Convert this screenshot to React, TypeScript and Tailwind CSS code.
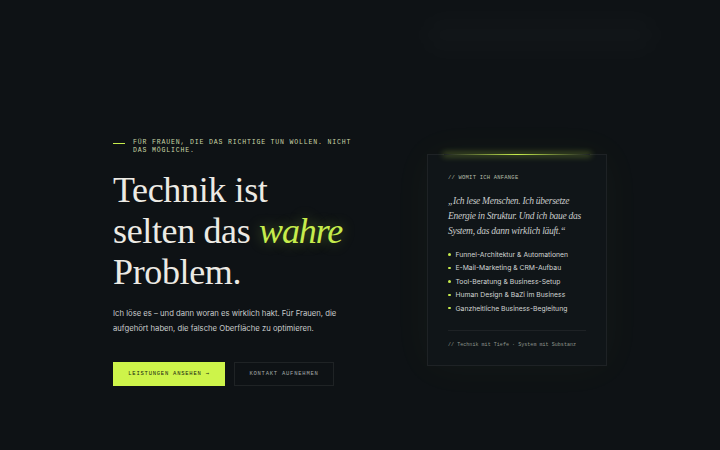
import * as React from 'react';

const services = [
  'Funnel-Architektur & Automationen',
  'E-Mail-Marketing & CRM-Aufbau',
  'Tool-Beratung & Business-Setup',
  'Human Design & BaZi im Business',
  'Ganzheitliche Business-Begleitung',
];

function Eyebrow() {
  return (
    <div className="flex items-start gap-2">
      <span className="mt-[4px] h-px w-3 shrink-0 bg-[#c6ec4c]" />
      <p className="font-['Liberation_Mono',monospace] text-[6.5px] leading-[8px] tracking-[0.13em] text-[#c9d6a6] uppercase">
        Für Frauen, die das Richtige tun wollen. Nicht das Mögliche.
      </p>
    </div>
  );
}

function ServiceCard() {
  return (
    <div className="relative border border-white/[0.06] bg-[#101518] px-[20px] pt-[19px] pb-[16px] shadow-[0_0_40px_rgba(197,240,74,0.04)]">
      <div className="absolute -top-px left-[16px] right-[16px] h-px bg-gradient-to-r from-transparent via-[#c6ec4c] to-transparent shadow-[0_0_6px_1px_rgba(197,240,74,0.45)]" />
      <p className="font-['Liberation_Mono',monospace] text-[5.5px] tracking-[0.04em] text-[#b5bda8] uppercase">
        // Womit ich anfange
      </p>
      <p className="mt-[12px] font-['Liberation_Serif',serif] text-[9.5px] leading-[15px] italic text-[#c9cccb] tracking-[-0.03em]">
        „Ich lese Menschen. Ich übersetze Energie in Struktur. Und ich baue das System, das dann wirklich läuft.“
      </p>
      <ul className="mt-[11px] flex flex-col gap-[4.4px]">
        {services.map((s) => (
          <li key={s} className="flex items-center gap-[5px] font-['Inter',sans-serif] text-[6.8px] leading-[9px] text-[#d1d4d3]">
            <span className="h-[2.5px] w-[2.5px] rounded-full bg-[#c6ec4c]" />
            {s}
          </li>
        ))}
      </ul>
      <div className="mt-[17px] border-t border-white/[0.06] pt-[11px]">
        <p className="whitespace-nowrap font-['Liberation_Mono',monospace] text-[5px] tracking-[0.01em] text-[#8f968d]">
          // Technik mit Tiefe · System mit Substanz
        </p>
      </div>
    </div>
  );
}

export default function App() {
  return (
    <div className="relative min-h-screen h-[450px] w-full overflow-hidden bg-[#0e1215]">
      <div className="pointer-events-none absolute left-[420px] top-[15px] h-[40px] w-[240px] rounded-full bg-white/[0.015] blur-[12px]" />
      <div className="flex h-full items-center px-[113px] pt-[70px]">
        <div className="grid w-full grid-cols-[1fr_180px] items-center gap-[70px]">
          <div className="pt-[5px]">
            <Eyebrow />
            <h1 className="mt-[15px] font-['Liberation_Serif',serif] text-[36px] leading-[41px] font-normal tracking-[-0.01em] text-[#eceae4]">
              Technik ist
              <br />
              selten das{' '}
              <em className="tracking-[-0.03em] text-[#c6ec4c] [text-shadow:0_0_14px_rgba(197,240,74,0.35)]">wahre</em>
              <br />
              Problem.
            </h1>
            <p className="mt-[13px] whitespace-nowrap font-['Inter',sans-serif] text-[7.7px] leading-[15px] text-[#c9cccc]">
              Ich löse es – und dann woran es wirklich hakt. Für Frauen, die
              <br />
              aufgehört haben, die falsche Oberfläche zu optimieren.
            </p>
            <div className="mt-[26px] flex gap-[9px]">
              <button className="h-[24px] w-[112px] bg-[#cdf44a] font-['Liberation_Mono',monospace] text-[5.5px] tracking-[0.14em] text-[#1a1f12] uppercase">
                Leistungen ansehen <span className="font-['DejaVu_Sans_Mono',monospace]">→</span>
              </button>
              <button className="h-[24px] w-[100px] border border-white/[0.07] font-['Liberation_Mono',monospace] text-[5.5px] tracking-[0.14em] text-[#a3a9a8] uppercase">
                Kontakt aufnehmen
              </button>
            </div>
          </div>
          <ServiceCard />
        </div>
      </div>
    </div>
  );
}
